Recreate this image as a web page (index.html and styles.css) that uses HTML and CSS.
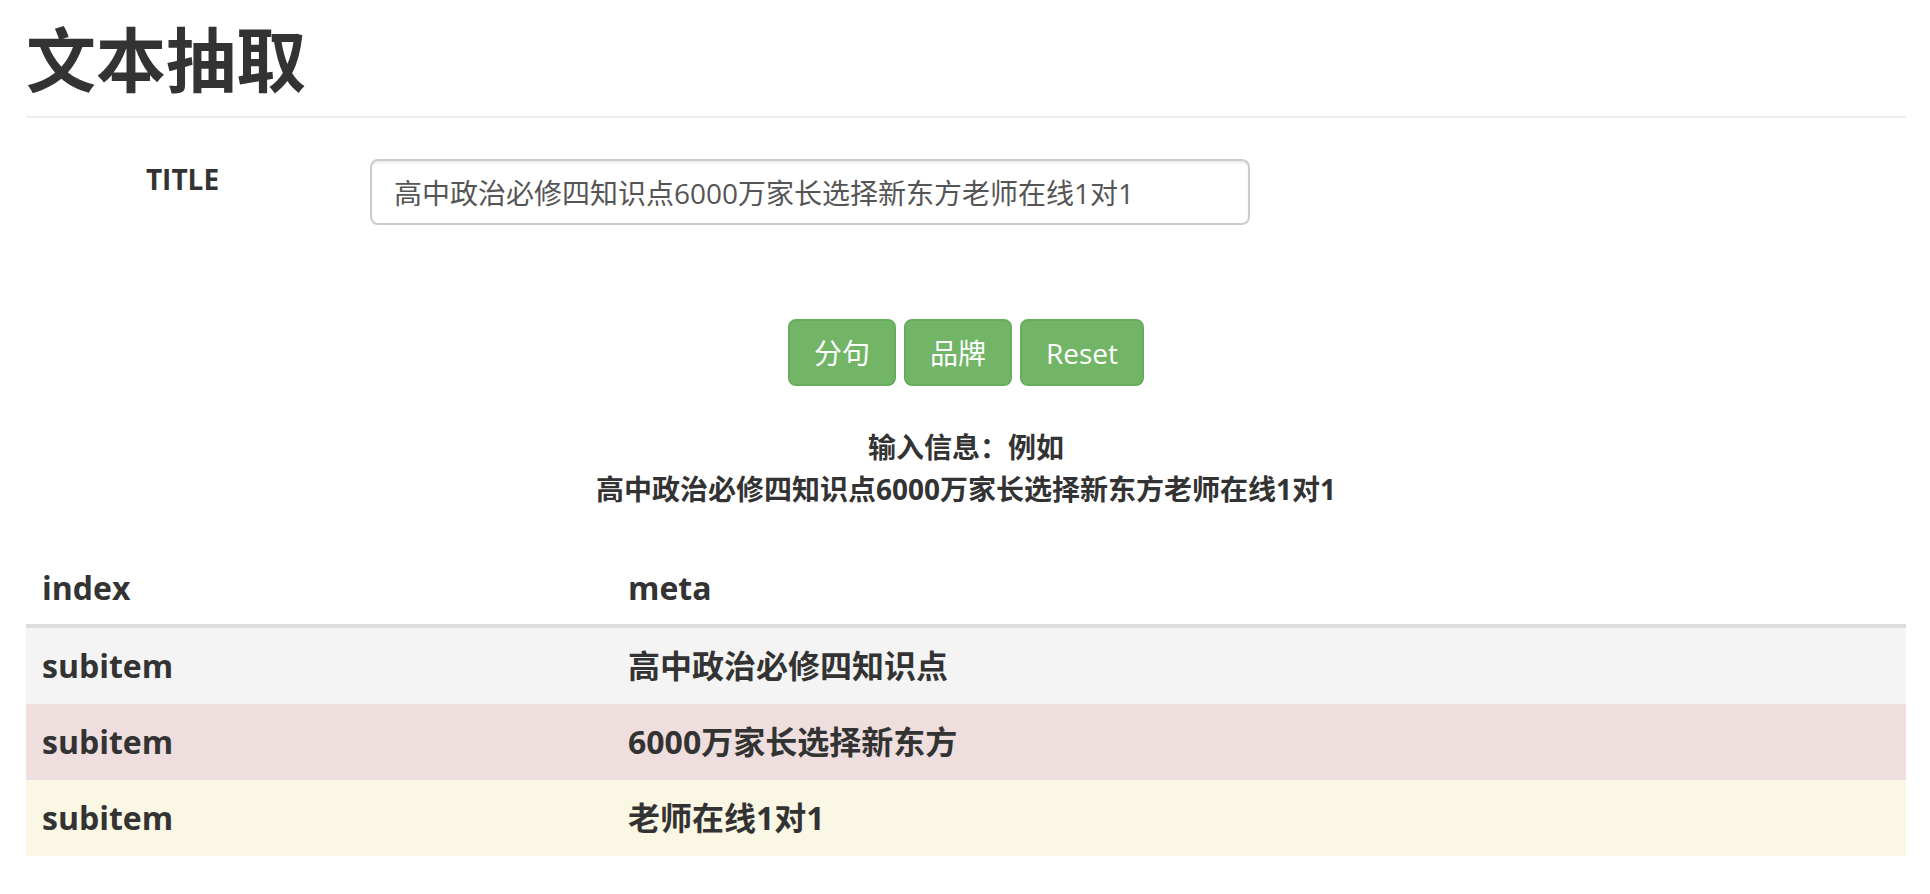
FILE: index.html
```html
<!DOCTYPE html>
<html lang="zh">
<head>
<meta charset="utf-8">
<title>文本抽取</title>
<link rel="stylesheet" href="styles.css">
</head>
<body>
<div class="page">
  <h1 class="page-title">文本抽取</h1>
  <hr class="divider">
  <form class="form-row">
    <label class="form-label" for="title">TITLE</label>
    <div class="form-field">
      <input id="title" class="text-input" type="text" value="高中政治必修四知识点6000万家长选择新东方老师在线1对1">
    </div>
  </form>
  <div class="actions">
    <button class="btn" type="button">分句</button>
    <button class="btn" type="button">品牌</button>
    <button class="btn" type="button">Reset</button>
  </div>
  <div class="info">
    <p class="info-line">输入信息：例如</p>
    <p class="info-line">高中政治必修四知识点6000万家长选择新东方老师在线1对1</p>
  </div>
  <table class="result-table">
    <thead>
      <tr><th class="col-index">index</th><th>meta</th></tr>
    </thead>
    <tbody>
      <tr class="row-active"><td>subitem</td><td>高中政治必修四知识点</td></tr>
      <tr class="row-danger"><td>subitem</td><td>6000万家长选择新东方</td></tr>
      <tr class="row-warning"><td>subitem</td><td>老师在线1对1</td></tr>
    </tbody>
  </table>
</div>
</body>
</html>
```
FILE: styles.css
```css
html, body {
  margin: 0;
  padding: 0;
  background: #fff;
}
body {
  font-family: "Open Sans", "Noto Sans CJK SC", sans-serif;
  font-size: 28px;
  line-height: 40px;
  color: #333;
}
.page {
  padding: 0 24px 0 26px;
}
.page-title {
  margin: 0;
  padding-top: 20px;
  font-size: 70px;
  line-height: 80px;
  font-weight: 700;
  color: #333;
}
.divider {
  margin: 16px 0 0;
  border: 0;
  border-top: 2px solid #eee;
  height: 0;
}
.form-row {
  display: flex;
  margin: 41px 0 0;
}
.form-label {
  width: 313px;
  flex: none;
  text-align: center;
  font-weight: 700;
  padding-top: 0;
  line-height: 40px;
}
.form-field {
  padding-left: 31px;
}
.text-input {
  box-sizing: border-box;
  width: 880px;
  height: 66px;
  padding: 12px 22px;
  font-family: "Open Sans", "Noto Sans CJK SC", sans-serif;
  font-size: 28px;
  color: #555;
  border: 2px solid #ccc;
  border-radius: 8px;
  box-shadow: inset 0 2px 2px rgba(0,0,0,.075);
  outline: none;
}
.actions {
  display: flex;
  justify-content: center;
  gap: 8px;
  margin-top: 94px;
}
.btn {
  box-sizing: border-box;
  height: 67px;
  padding: 0 24px;
  font-family: "Open Sans", "Noto Sans CJK SC", sans-serif;
  font-size: 28px;
  line-height: 40px;
  color: #fff;
  background: #72b567;
  border: 2px solid #68ad5d;
  border-radius: 8px;
}
.info {
  margin-top: 40px;
  text-align: center;
  font-weight: 700;
}
.info-line {
  margin: 0;
  line-height: 42px;
}
.result-table {
  width: 100%;
  border-collapse: collapse;
  margin-top: 42px;
  font-size: 32px;
}
.result-table th,
.result-table td {
  text-align: left;
  font-weight: 700;
  padding: 18px 16px;
  line-height: 40px;
}
.result-table th {
  border-bottom: 4px solid #ddd;
  padding: 16px 16px;
}
.col-index {
  width: 554px;
}
.row-active td { background: #f4f4f4; }
.row-danger td { background: #eedede; }
.row-warning td { background: #faf7e4; }
```
